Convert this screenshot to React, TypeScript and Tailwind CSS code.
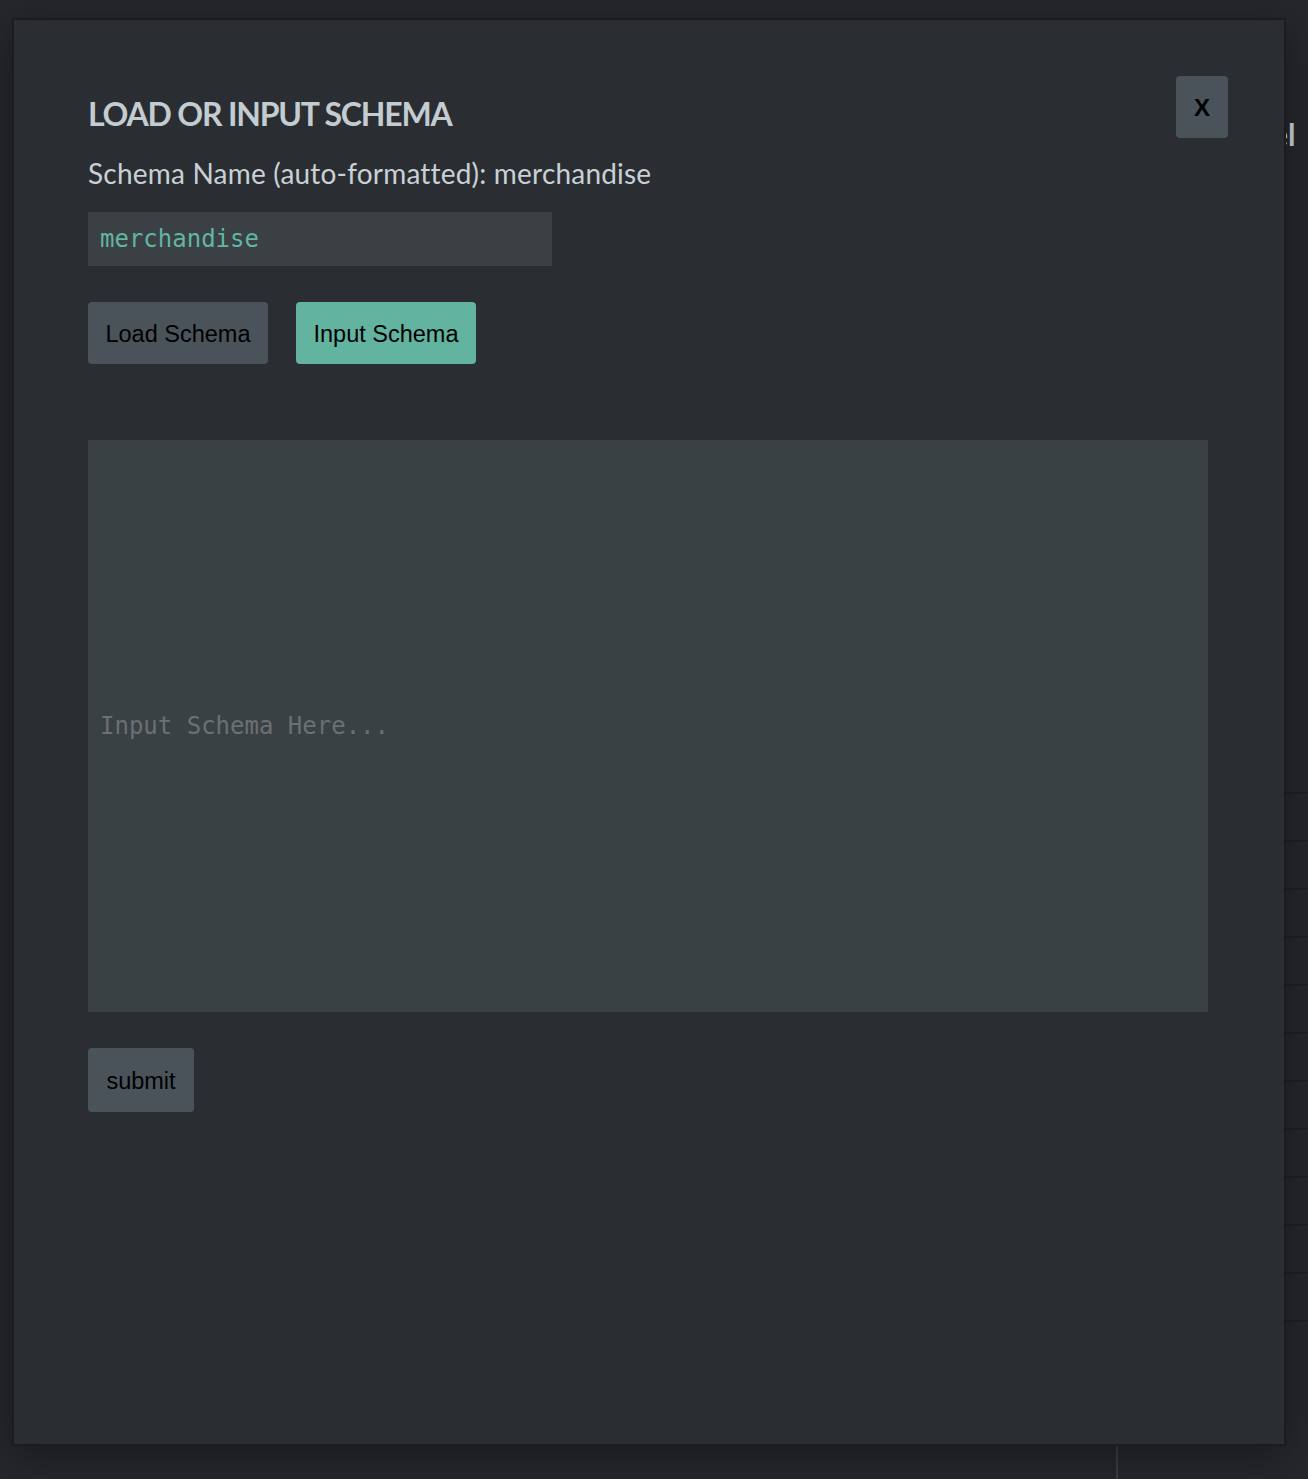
import React from "react";

const btn =
  "h-[62px] pt-[4px] rounded-[4px] text-[23.5px] text-black [font-family:'Liberation_Sans',Arial,sans-serif]";

export default function App() {
  const rows = Array.from({ length: 12 }, (_, i) => i);
  return (
    <div className="relative w-[1308px] h-[1479px] overflow-hidden bg-[#26272b]">
      {/* background page content, partly hidden behind the modal */}
      <div className="absolute left-[1272px] top-[112px] text-[30px] font-bold text-[#c9d2d6] [font-family:Lato,sans-serif]">
        el
      </div>
      <div className="absolute left-[1100px] top-[792px] w-[208px] flex flex-col">
        {rows.map((r) => (
          <div key={r} className="h-[48px] border-t-2 border-[#1f2024]" />
        ))}
      </div>
      <div className="absolute left-[1116px] top-[1440px] w-[2px] h-[40px] bg-[#3a3d42]" />

      {/* modal */}
      <div className="absolute left-[12px] top-[18px] w-[1274px] h-[1428px] border-2 border-[#1b1c1f] bg-[#2a2e33] shadow-[0_10px_40px_rgba(0,0,0,0.35)]">
        <div className="flex flex-col items-start pl-[74px] pr-[56px] pt-[56px]">
          <div className="flex w-full items-start justify-between">
            <h1 className="mt-[18px] text-[32px] leading-[40px] font-bold text-[#c3ccd0] tracking-[-1.2px] [font-family:Lato,sans-serif]">
              LOAD OR INPUT SCHEMA
            </h1>
            <button className="w-[52px] h-[62px] pt-[2px] rounded-[4px] bg-[#4b535a] text-[24px] font-bold text-black [font-family:'Liberation_Sans',Arial,sans-serif]">
              X
            </button>
          </div>
          <p className="mt-[17px] text-[28px] leading-[36px] tracking-[0.2px] text-[#c9d1d5] [font-family:Lato,sans-serif]">
            Schema Name (auto-formatted): merchandise
          </p>
          <input
            readOnly
            value="merchandise"
            className="mt-[21px] block w-[464px] h-[54px] px-[12px] bg-[#3a4044] text-[24px] text-[#62b6a1] outline-none [font-family:'DejaVu_Sans_Mono',monospace]"
          />
          <div className="mt-[36px] flex gap-[28px]">
            <button className={`${btn} w-[180px] bg-[#4b535a]`}>Load Schema</button>
            <button className={`${btn} w-[180px] bg-[#62b3a0]`}>Input Schema</button>
          </div>
          <textarea
            placeholder="Input Schema Here..."
            className="mt-[76px] block w-[1120px] h-[572px] resize-none px-[12px] pt-[270px] bg-[#3a4145] text-[24px] leading-[32px] text-[#c9d1d5] placeholder:text-[#6c7072] outline-none [font-family:'DejaVu_Sans_Mono',monospace]"
          />
          <button className={`${btn} mt-[36px] w-[106px] h-[64px] bg-[#4b535a]`}>submit</button>
        </div>
      </div>
    </div>
  );
}
